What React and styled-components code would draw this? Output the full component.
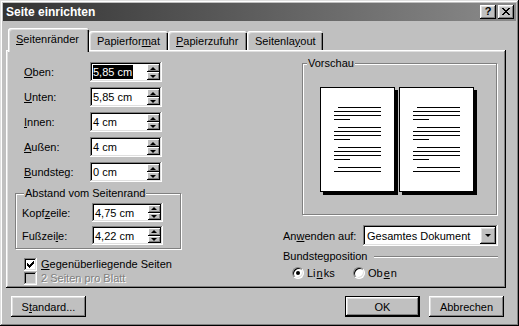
import styled, { createGlobalStyle } from 'styled-components'

const GlobalStyle = createGlobalStyle`
  html, body {
    margin: 0;
    padding: 0;
    background: #c0c0c0;
  }
  body {
    font-family: "Liberation Sans", Arial, sans-serif;
    font-size: 11px;
    color: #000;
  }
`

const raised = `
  box-shadow: inset -1px -1px #000, inset 1px 1px #fff,
    inset -2px -2px #808080, inset 2px 2px #dfdfdf;
`
const sunken = `
  box-shadow: inset -1px -1px #fff, inset 1px 1px #808080,
    inset -2px -2px #dfdfdf, inset 2px 2px #000;
`

const Window = styled.div`
  width: 519px;
  height: 326px;
  box-sizing: border-box;
  padding: 3px;
  background: #c0c0c0;
  box-shadow: inset -1px -1px #000, inset 1px 1px #dfdfdf,
    inset -2px -2px #808080, inset 2px 2px #fff;
  display: flex;
  flex-direction: column;
`

const TitleBar = styled.div`
  height: 18px;
  display: flex;
  align-items: center;
  padding: 0 2px 0 3px;
  background: linear-gradient(to right, #333333, #8a8a8a);
`

const Title = styled.div`
  flex: 1;
  color: #fff;
  font-weight: bold;
  font-size: 12px;
`

const TitleButton = styled.div`
  width: 16px;
  height: 14px;
  margin-left: ${p => p.$gap || 0}px;
  box-sizing: border-box;
  background: #c0c0c0;
  ${raised}
  display: flex;
  align-items: center;
  justify-content: center;
  font-weight: bold;
  font-size: 11px;
  line-height: 11px;
  padding-bottom: 1px;
`

const Body = styled.div`
  flex: 1;
  display: flex;
  flex-direction: column;
  padding: 7px 10px 6px 3px;
`

const TabList = styled.div`
  height: 22px;
  display: flex;
  align-items: flex-end;
  padding-left: 2px;
`

const Tab = styled.div`
  width: ${p => p.$w}px;
  height: ${p => (p.$active ? 24 : 19)}px;
  margin-bottom: ${p => (p.$active ? -2 : 0)}px;
  position: relative;
  z-index: ${p => (p.$active ? 1 : 0)};
  box-sizing: border-box;
  padding-left: 8px;
  padding-bottom: ${p => (p.$active ? 3 : 0)}px;
  background: #c0c0c0;
  border-radius: 3px 3px 0 0;
  box-shadow: inset 1px 1px #fff, inset 2px 2px #dfdfdf,
    inset -1px 0 #000, inset -2px 0 #808080;
  display: flex;
  align-items: center;
  white-space: nowrap;
`

const Panel = styled.div`
  height: 238px;
  box-sizing: border-box;
  ${raised}
  box-shadow: inset -1px -1px #000, inset 1px 1px #fff,
    inset -2px -2px #808080, inset 2px 2px #dfdfdf;
  display: grid;
  grid-template-columns: 166px 215px;
  column-gap: 102px;
  padding: 12px 8px 0 9px;
`

const Column = styled.div`
  display: flex;
  flex-direction: column;
`

const Rows = styled.div`
  display: flex;
  flex-direction: column;
  gap: ${p => p.$gap}px;
`

const Row = styled.div`
  display: flex;
  align-items: center;
  padding-left: ${p => p.$indent || 0}px;
`

const Label = styled.div`
  width: ${p => p.$w}px;
  white-space: nowrap;
`

const U = styled.span`
  text-decoration: underline;
  text-underline-offset: 1px;
`

const Field = styled.div`
  width: ${p => p.$w}px;
  height: ${p => p.$h}px;
  box-sizing: border-box;
  padding: 2px;
  background: #fff;
  ${sunken}
  display: flex;
`

const FieldText = styled.div`
  flex: 1;
  display: flex;
  align-items: center;
  padding-left: ${p => p.$pad || 1}px;
  white-space: nowrap;
`

const Highlight = styled.span`
  background: ${p => (p.$on ? '#000' : 'transparent')};
  color: ${p => (p.$on ? '#fff' : '#000')};
  line-height: 14px;
  padding-right: 1px;
`

const Spinner = styled.div`
  width: 13px;
  display: flex;
  flex-direction: column;
`

const SpinButton = styled.div`
  flex: 1;
  background: #c0c0c0;
  box-shadow: inset -1px -1px #000, inset 1px 1px #fff, inset -2px -2px #808080;
  display: flex;
  align-items: center;
  justify-content: center;
  padding-right: 1px;
`

const Arrow = styled.div`
  width: 0;
  height: 0;
  border-left: ${p => p.$size}px solid transparent;
  border-right: ${p => p.$size}px solid transparent;
  ${p => (p.$down ? 'border-top' : 'border-bottom')}: ${p => p.$size}px solid #000;
`

const Group = styled.fieldset`
  margin: ${p => p.$top}px 0 0 ${p => p.$left || 0}px;
  width: ${p => p.$w}px;
  height: ${p => (p.$h ? `${p.$h}px` : 'auto')};
  box-sizing: border-box;
  min-width: 0;
  padding: ${p => p.$pad};
  border: 1px solid #808080;
  box-shadow: inset 1px 1px #fff, 1px 1px #fff;
`

const Legend = styled.legend`
  padding: 0 1px;
  margin-left: ${p => p.$ml}px;
  line-height: 13px;
  background: #c0c0c0;
`

const Check = styled.div`
  width: 13px;
  height: 13px;
  box-sizing: border-box;
  background: ${p => (p.$disabled ? '#c0c0c0' : '#fff')};
  ${sunken}
  display: flex;
  align-items: center;
  justify-content: center;
  margin-right: 4px;
`

const CheckRow = styled.div`
  height: 14px;
  display: flex;
  align-items: center;
  padding-left: 9px;
  color: ${p => (p.$disabled ? '#808080' : '#000')};
  text-shadow: ${p => (p.$disabled ? '1px 1px #fff' : 'none')};
  margin-top: ${p => p.$top}px;
`

const Preview = styled.div`
  display: flex;
  gap: 4px;
  padding: 17px 0 0 17px;
`

const Page = styled.div`
  width: 75px;
  height: 105px;
  box-sizing: border-box;
  border: 1px solid #000;
  background: #fff;
  box-shadow: 3px 3px #000;
`

const Select = styled(Field)`
  align-items: stretch;
`

const DropButton = styled.div`
  width: 16px;
  background: #c0c0c0;
  ${raised}
  display: flex;
  align-items: center;
  justify-content: center;
`

const Heading = styled.div`
  display: flex;
  align-items: center;
  gap: 7px;
  margin-top: ${p => p.$top}px;
  line-height: 13px;
`

const Rule = styled.div`
  flex: 1;
  height: 0;
  border-top: 1px solid #808080;
  border-bottom: 1px solid #fff;
`

const RadioRow = styled.div`
  display: flex;
  align-items: center;
  margin-top: 4px;
  padding-left: 9px;
`

const RadioOption = styled.div`
  width: ${p => p.$w}px;
  display: flex;
  align-items: center;
  gap: 1px;
`

const Radio = styled.div`
  width: 12px;
  height: 12px;
  box-sizing: border-box;
  border-radius: 50%;
  border: 1px solid;
  border-color: #808080 #fff #fff #808080;
  background: #fff;
  box-shadow: inset 1px 1px #000, inset -1px -1px #dfdfdf;
  display: flex;
  align-items: center;
  justify-content: center;
  margin-right: 2px;
`

const Dot = styled.div`
  width: 4px;
  height: 4px;
  border-radius: 50%;
  background: #000;
`

const Footer = styled.div`
  display: flex;
  align-items: center;
  margin-top: 8px;
  padding: 0 2px 0 5px;
  gap: 9px;
`

const Button = styled.div`
  width: 75px;
  height: 21px;
  box-sizing: border-box;
  background: #c0c0c0;
  ${raised}
  border: ${p => (p.$default ? '1px solid #000' : 'none')};
  display: flex;
  align-items: center;
  justify-content: center;
  margin-left: ${p => (p.$push ? 'auto' : '0')};
`

const CHECK = [
  '......X',
  '.....XX',
  'X...XXX',
  'XX.XXX.',
  'XXXXX..',
  '.XXX...',
  '..X....',
]

const CheckMark = () => (
  <svg width="7" height="7" viewBox="0 0 7 7" shapeRendering="crispEdges">
    {CHECK.flatMap((row, y) =>
      row.split('').map((c, x) =>
        c === 'X' ? <rect key={`${x}-${y}`} x={x} y={y} width="1" height="1" fill="#000" /> : null
      )
    )}
  </svg>
)

const CloseGlyph = () => (
  <svg width="8" height="7" viewBox="0 0 8 7" shapeRendering="crispEdges">
    <path d="M0 0h2v1h1v1h2V1h1V0h2v1H7v1H6v1H5v1h1v1h1v1h1v1H6V6H5V5H3v1H2v1H0V6h1V5h1V4h1V3H2V2H1V1H0z" fill="#000" />
  </svg>
)

// paragraph lines of a preview page: [x, width, y]
const LINES = [20, 40, 60, 80].flatMap((top, p) => {
  const rows = [
    [17, 43, top],
    [13, 47, top + 4],
    [13, 47, top + 8],
    [13, 16, top + 12],
  ]
  return p === 3 ? rows.slice(0, 2).map((r, i) => (i === 1 ? [13, 47, r[2]] : r)) : rows
})

const PageLines = () => (
  <svg width="73" height="103" viewBox="0 0 73 103" shapeRendering="crispEdges">
    {LINES.map(([x, w, y], i) => (
      <rect key={i} x={x} y={y - 1} width={w} height="1" fill="#000" />
    ))}
  </svg>
)

const SpinBox = ({ value, w = 72, h = 20, selected }) => (
  <Field $w={w} $h={h}>
    <FieldText>
      <Highlight $on={selected}>{value}</Highlight>
    </FieldText>
    <Spinner>
      <SpinButton>
        <Arrow $size={3} />
      </SpinButton>
      <SpinButton>
        <Arrow $size={3} $down />
      </SpinButton>
    </Spinner>
  </Field>
)

const margins = [
  { pre: '', key: 'O', post: 'ben:', value: '5,85 cm', selected: true },
  { pre: '', key: 'U', post: 'nten:', value: '5,85 cm' },
  { pre: '', key: 'I', post: 'nnen:', value: '4 cm' },
  { pre: '', key: 'A', post: 'ußen:', value: '4 cm' },
  { pre: '', key: 'B', post: 'undsteg:', value: '0 cm' },
]

const tabs = [
  { pre: '', key: 'S', post: 'eitenränder', w: 81, active: true },
  { pre: 'Papierfor', key: 'm', post: 'at', w: 79 },
  { pre: '', key: 'P', post: 'apierzufuhr', w: 79 },
  { pre: 'Seitenla', key: 'y', post: 'out', w: 76 },
]

export default function App() {
  return (
    <>
      <GlobalStyle />
      <Window>
        <TitleBar>
          <Title>Seite einrichten</Title>
          <TitleButton>?</TitleButton>
          <TitleButton $gap={2}>
            <CloseGlyph />
          </TitleButton>
        </TitleBar>
        <Body>
          <TabList>
            {tabs.map(t => (
              <Tab key={t.post} $w={t.w} $active={t.active}>
                {t.pre}
                <U>{t.key}</U>
                {t.post}
              </Tab>
            ))}
          </TabList>
          <Panel>
            <Column>
              <Rows $gap={5}>
                {margins.map(m => (
                  <Row key={m.post} $indent={9} style={{ height: 20 }}>
                    <Label $w={66}>
                      <U>{m.key}</U>
                      {m.post}
                    </Label>
                    <SpinBox value={m.value} selected={m.selected} />
                  </Row>
                ))}
              </Rows>
              <Group $top={5} $w={166} $pad="3px 0 3px 6px">
                <Legend $ml={2}>Abstand vom Seitenrand</Legend>
                <Rows $gap={4}>
                  <Row>
                    <Label $w={70}>
                      Kopf<U>z</U>eile:
                    </Label>
                    <SpinBox value="4,75 cm" w={71} h={19} />
                  </Row>
                  <Row>
                    <Label $w={70}>
                      Fußzei<U>l</U>e:
                    </Label>
                    <SpinBox value="4,22 cm" w={71} h={19} />
                  </Row>
                </Rows>
              </Group>
              <CheckRow $top={8}>
                <Check>
                  <CheckMark />
                </Check>
                <U>G</U>egenüberliegende Seiten
              </CheckRow>
              <CheckRow $top={0} $disabled>
                <Check $disabled />
                2 Seiten pro Blatt
              </CheckRow>
            </Column>
            <Column>
              <Group $top={-5} $left={19} $w={195} $h={158} $pad="0">
                <Legend $ml={4}>Vorschau</Legend>
                <Preview>
                  <Page>
                    <PageLines />
                  </Page>
                  <Page>
                    <PageLines />
                  </Page>
                </Preview>
              </Group>
              <Row style={{ marginTop: 10 }}>
                <Label $w={80}>
                  An<U>w</U>enden auf:
                </Label>
                <Select $w={135} $h={21}>
                  <FieldText $pad={2}>Gesamtes Dokument</FieldText>
                  <DropButton>
                    <Arrow $size={3} $down />
                  </DropButton>
                </Select>
              </Row>
              <Heading $top={4}>
                Bundstegposition
                <Rule />
              </Heading>
              <RadioRow>
                <RadioOption $w={61}>
                  <Radio>
                    <Dot />
                  </Radio>
                  Li<U>n</U>ks
                </RadioOption>
                <RadioOption $w={60}>
                  <Radio />
                  Ob<U>e</U>n
                </RadioOption>
              </RadioRow>
            </Column>
          </Panel>
          <Footer>
            <Button>
              S<U>t</U>andard...
            </Button>
            <Button $default $push>
              OK
            </Button>
            <Button>Abbrechen</Button>
          </Footer>
        </Body>
      </Window>
    </>
  )
}
